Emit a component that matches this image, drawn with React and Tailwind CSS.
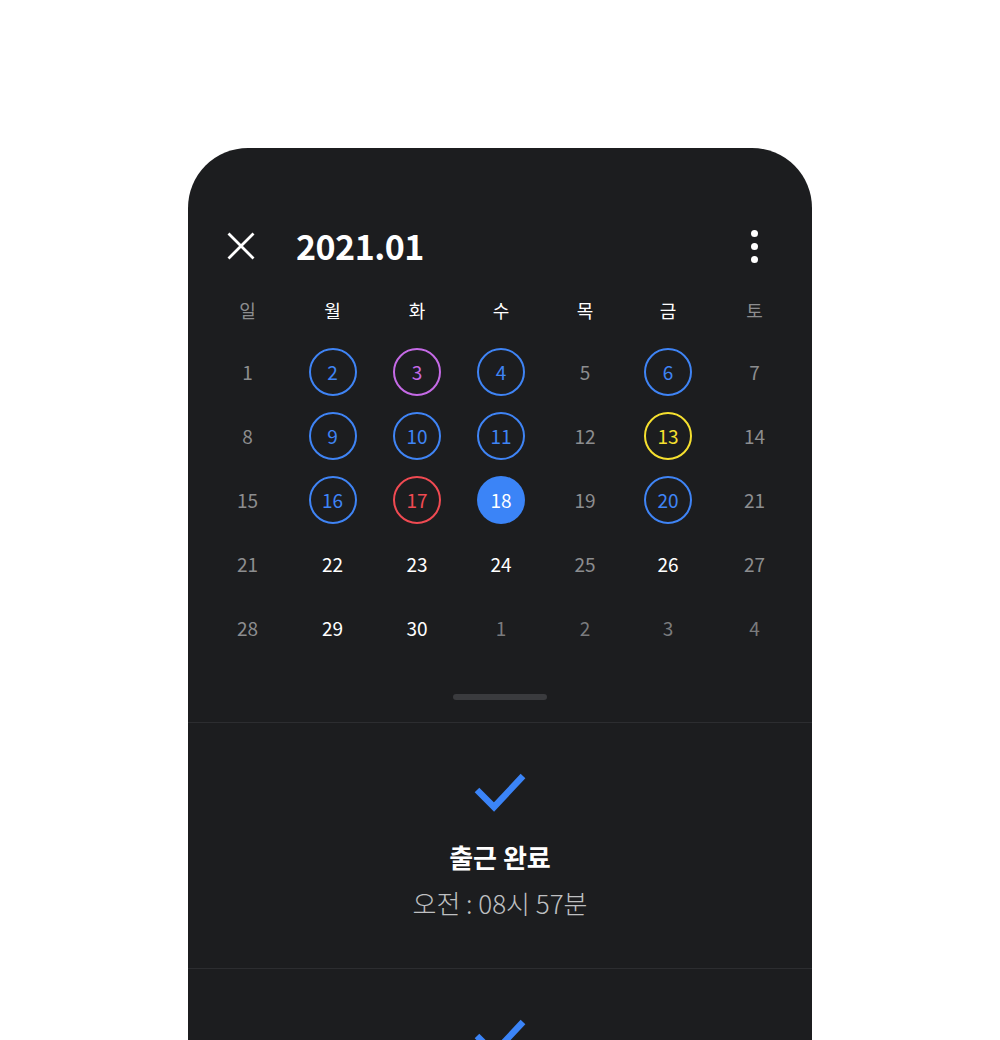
const FONT = { fontFamily: '"Noto Sans CJK KR", "Noto Sans", sans-serif' };

const weekDays = [
  { label: '일', dim: true },
  { label: '월' },
  { label: '화' },
  { label: '수' },
  { label: '목' },
  { label: '금' },
  { label: '토', dim: true },
];

// tone: grey | white | faint | blue | purple | yellow | red | filled
const days = [
  [1, 'grey'], [2, 'blue'], [3, 'purple'], [4, 'blue'], [5, 'grey'], [6, 'blue'], [7, 'grey'],
  [8, 'grey'], [9, 'blue'], [10, 'blue'], [11, 'blue'], [12, 'grey'], [13, 'yellow'], [14, 'grey'],
  [15, 'grey'], [16, 'blue'], [17, 'red'], [18, 'filled'], [19, 'grey'], [20, 'blue'], [21, 'grey'],
  [21, 'grey'], [22, 'white'], [23, 'white'], [24, 'white'], [25, 'grey'], [26, 'white'], [27, 'grey'],
  [28, 'grey'], [29, 'white'], [30, 'white'], [1, 'faint'], [2, 'faint'], [3, 'faint'], [4, 'faint'],
];

const toneClass = {
  grey: 'text-[#8c8d8f]',
  white: 'text-white',
  faint: 'text-[#7a7b7d]',
  blue: 'border-2 border-[#3f84f5] text-[#3f84f5]',
  purple: 'border-2 border-[#c56ae6] text-[#c56ae6]',
  yellow: 'border-2 border-[#f6e02f] text-[#f6e02f]',
  red: 'border-2 border-[#f04a52] text-[#f04a52]',
  filled: 'bg-[#3b84f7] text-white',
};

const cols = 'grid grid-cols-[85px_85px_84px_84px_84px_82px_91px]';

const Check = () => (
  <svg width="52" height="40" viewBox="0 0 52 40" fill="none">
    <path d="M3 18 L20 35 L49 4" stroke="#3b84f7" strokeWidth="6.5" strokeLinecap="butt" strokeLinejoin="miter" />
  </svg>
);

const CloseIcon = () => (
  <svg width="28" height="28" viewBox="0 0 28 28" fill="none">
    <path d="M1.5 1.5 L26.5 26.5 M26.5 1.5 L1.5 26.5" stroke="white" strokeWidth="2.8" />
  </svg>
);

export default function App() {
  return (
    <div className="h-[1040px] overflow-hidden bg-white pt-[148px]" style={FONT}>
      <div className="mx-auto w-[624px] h-[1000px] rounded-t-[60px] bg-[#1c1d1f] pt-[76px]">
        {/* Header */}
        <div className="flex h-[44px] items-center pl-[39px] pr-[54px]">
          <CloseIcon />
          <h1 className="ml-[41px] text-[34px] font-bold leading-none text-white tracking-[-0.5px]">2021.01</h1>
          <div className="ml-auto flex flex-col items-center gap-[6px]">
            <span className="h-[7px] w-[7px] rounded-full bg-white" />
            <span className="h-[7px] w-[7px] rounded-full bg-white" />
            <span className="h-[7px] w-[7px] rounded-full bg-white" />
          </div>
        </div>

        {/* Calendar */}
        <div className="pl-[17px]">
          <div className={`mt-[30px] ${cols}`}>
            {weekDays.map((d) => (
              <div
                key={d.label}
                className={`flex h-[24px] items-center justify-center text-[18px] ${d.dim ? 'text-[#8c8d8f]' : 'text-white'}`}
              >
                {d.label}
              </div>
            ))}
          </div>
          <div className={`mt-[18px] ${cols}`}>
            {days.map(([n, tone], i) => (
              <div key={i} className="flex h-[64px] items-center justify-center">
                <div className={`flex h-[48px] w-[48px] items-center justify-center rounded-full text-[19px] ${toneClass[tone]}`}>
                  {n}
                </div>
              </div>
            ))}
          </div>
        </div>

        {/* Handle */}
        <div className="flex justify-center pt-[34px] pb-[22px]">
          <div className="h-[6px] w-[94px] rounded-full bg-[#3a3b3e]" />
        </div>

        <div className="flex flex-col items-center border-t border-[#2c2d30] pt-[49px] pb-[49px]">
          <Check />
          <div className="mt-[29px] text-[26px] leading-[32px] font-bold text-white">출근 완료</div>
          <div className="mt-[14px] text-[26px] leading-[32px] font-light text-[#bfc0c2]">오전 : 08시 57분</div>
        </div>

        <div className="flex flex-col items-center border-t border-[#2c2d30] pt-[49px]">
          <Check />
        </div>
      </div>
    </div>
  );
}
